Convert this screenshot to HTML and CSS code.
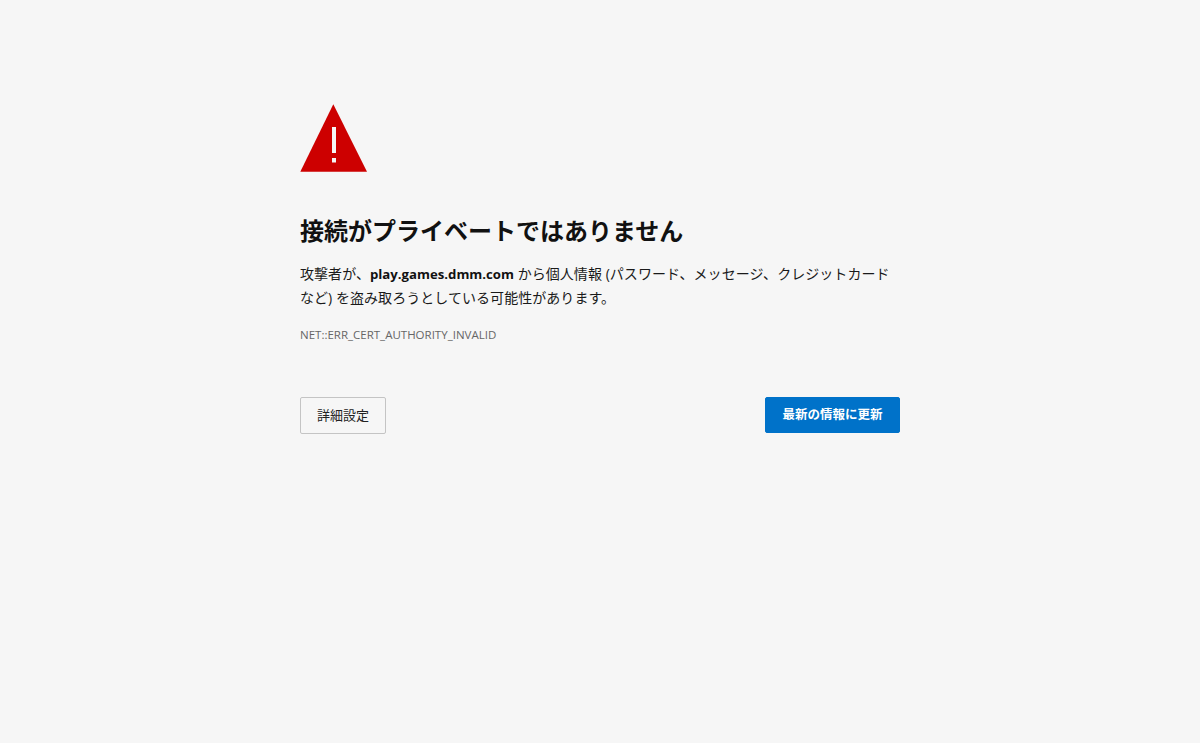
FILE: index.html
```html
<!DOCTYPE html>
<html lang="ja">
<head>
<meta charset="utf-8">
<title>プライバシー エラー</title>
<link rel="stylesheet" href="styles.css">
</head>
<body>
<main class="content">
  <svg class="warn-icon" viewBox="0 0 67 68" width="67" height="68" aria-hidden="true">
    <path class="warn-bg" d="M33.3 0.3 L67 67.7 L0.3 67.7 Z"/>
    <rect class="warn-mark" x="32" y="23" width="4" height="26"/>
    <rect class="warn-mark" x="32" y="54" width="4" height="4.5"/>
  </svg>
  <h1 class="title">接続がプライベートではありません</h1>
  <p class="message">攻撃者が、<strong>play.games.dmm.com</strong> から個人情報 (パスワード、メッセージ、クレジットカードなど) を盗み取ろうとしている可能性があります。</p>
  <div class="code">NET::ERR_CERT_AUTHORITY_INVALID</div>
  <div class="actions">
    <button class="btn btn-secondary" type="button">詳細設定</button>
    <button class="btn btn-primary" type="button">最新の情報に更新</button>
  </div>
</main>
</body>
</html>
```

FILE: styles.css
```css
html, body {
  margin: 0;
  padding: 0;
  height: 100%;
  background: #f6f6f6;
}
body {
  font-family: "Open Sans", "Noto Sans CJK JP", sans-serif;
  color: #1a1a1a;
}
.content {
  width: 600px;
  margin: 0 auto;
  padding-top: 104px;
  display: flex;
  flex-direction: column;
}
.warn-icon {
  display: block;
}
.warn-bg {
  fill: #cd0000;
}
.warn-mark {
  fill: #f6f6f6;
}
.title {
  margin: 41px 0 0;
  font-size: 24px;
  line-height: 36px;
  font-weight: 700;
  color: #111;
}
.message {
  margin: 13px 0 0;
  font-size: 14px;
  line-height: 24px;
  letter-spacing: 0.05px;
}
.message strong {
  font-size: 13.2px;
  font-weight: 700;
  letter-spacing: 0;
  color: #111;
}
.code {
  margin-top: 16px;
  font-size: 11.5px;
  line-height: 18px;
  color: #666;
}
.actions {
  margin-top: 53px;
  display: flex;
  justify-content: space-between;
  align-items: flex-start;
}
.btn {
  font-family: inherit;
  border-radius: 2px;
  height: 36px;
  padding: 0 16.5px 3px;
}
.btn-secondary {
  height: 37px;
  padding: 0 16px 3px;
  font-size: 13px;
  background: #f6f6f6;
  border: 1px solid #c4c4c4;
  color: #222;
}
.btn-primary {
  font-size: 12.5px;
  background: #0072c9;
  border: 1px solid #0072c9;
  color: #fff;
  font-weight: 700;
}
```
